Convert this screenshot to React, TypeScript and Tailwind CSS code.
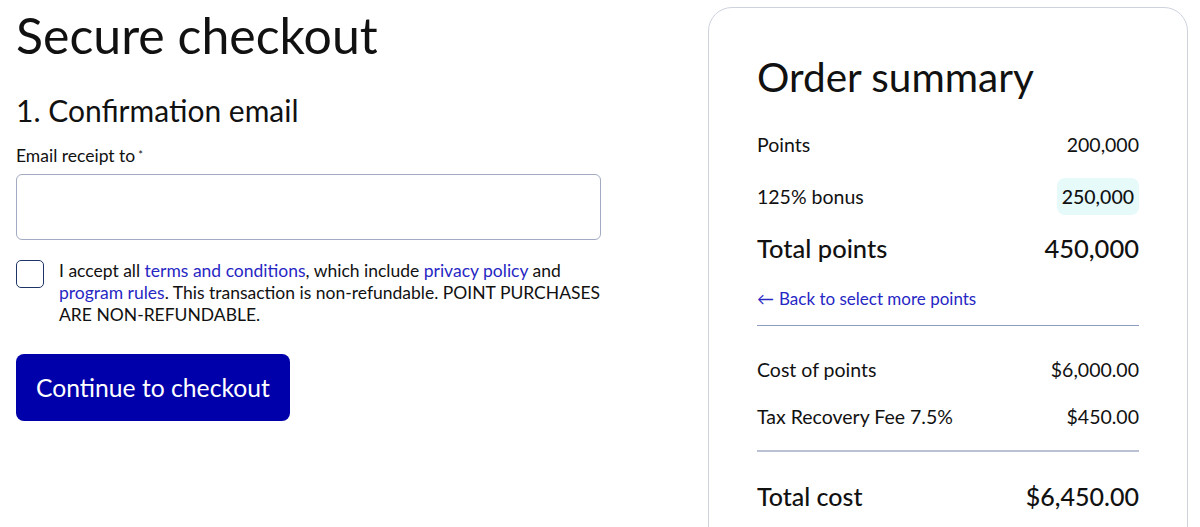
import React from 'react';

const font = { fontFamily: 'Lato, "Noto Sans", sans-serif' };

function Row({ label, value, className = '' }: { label: string; value: React.ReactNode; className?: string }) {
  return (
    <div className={`flex items-center justify-between ${className}`}>
      <span>{label}</span>
      <span>{value}</span>
    </div>
  );
}

export default function App() {
  return (
    <div className="min-h-screen bg-white text-[#111] flex pl-4 pr-3 pt-0" style={font}>
      {/* Checkout form */}
      <div className="w-[585px] shrink-0">
        <h1 className="text-[50px] leading-[60px] pt-[5px]">Secure checkout</h1>
        <h2 className="text-[30px] leading-[36px] mt-[27px]">1. Confirmation email</h2>

        <label className="block text-[17.5px] leading-[24px] mt-[16px]">
          Email receipt to<sup className="ml-[3px] text-[11px] relative -top-[3px]">*</sup>
        </label>
        <input
          type="email"
          className="block w-full h-[66px] mt-[6px] rounded-[6px] border border-[#a3abc2] px-4 text-[18px] outline-none"
        />

        <div className="flex items-start gap-[15px] mt-[20px]">
          <span className="w-[28px] h-[28px] shrink-0 rounded-[5px] border-[1.5px] border-[#1d3466]" />
          <p className="text-[17.5px] leading-[22px] w-[542px]">
            I accept all <a className="text-[#2727c4]">terms and conditions</a>, which include{' '}
            <a className="text-[#2727c4]">privacy policy</a> and <a className="text-[#2727c4]">program rules</a>. This
            transaction is non-refundable. POINT PURCHASES ARE NON-REFUNDABLE.
          </p>
        </div>

        <button className="mt-[28px] h-[67px] px-[20px] rounded-[8px] bg-[#0000aa] text-white text-[24.7px]">
          Continue to checkout
        </button>
      </div>

      {/* Order summary */}
      <div className="ml-auto mt-[7px] w-[480px] h-[600px] rounded-[24px] border border-[#cdd3de] px-[48px] pt-[44px]">
        <h2 className="text-[40.5px] leading-[50px]">Order summary</h2>

        <Row label="Points" value="200,000" className="text-[19.5px] leading-[24px] mt-[31px]" />
        <Row
          label="125% bonus"
          value={<span className="block rounded-[8px] bg-[#e6fafa] px-[5px] font-medium">250,000</span>}
          className="text-[19.5px] leading-[37px] mt-[21px]"
        />
        <Row label="Total points" value="450,000" className="text-[25.5px] leading-[32px] font-medium mt-[17px]" />

        <a className="flex items-center gap-[5px] text-[17px] leading-[24px] text-[#2727c4] mt-[23px]">
          <span>←</span>
          <span>Back to select more points</span>
        </a>

        <div className="h-px bg-[#8d9bc2] mt-[14px]" />

        <Row label="Cost of points" value="$6,000.00" className="text-[19.5px] leading-[24px] mt-[32px]" />
        <Row label="Tax Recovery Fee 7.5%" value="$450.00" className="text-[19.5px] leading-[24px] mt-[23px]" />

        <div className="h-[2px] bg-[#b9c1d3] mt-[21px]" />

        <Row label="Total cost" value="$6,450.00" className="text-[25px] leading-[36px] font-medium mt-[26px]" />
      </div>
    </div>
  );
}
